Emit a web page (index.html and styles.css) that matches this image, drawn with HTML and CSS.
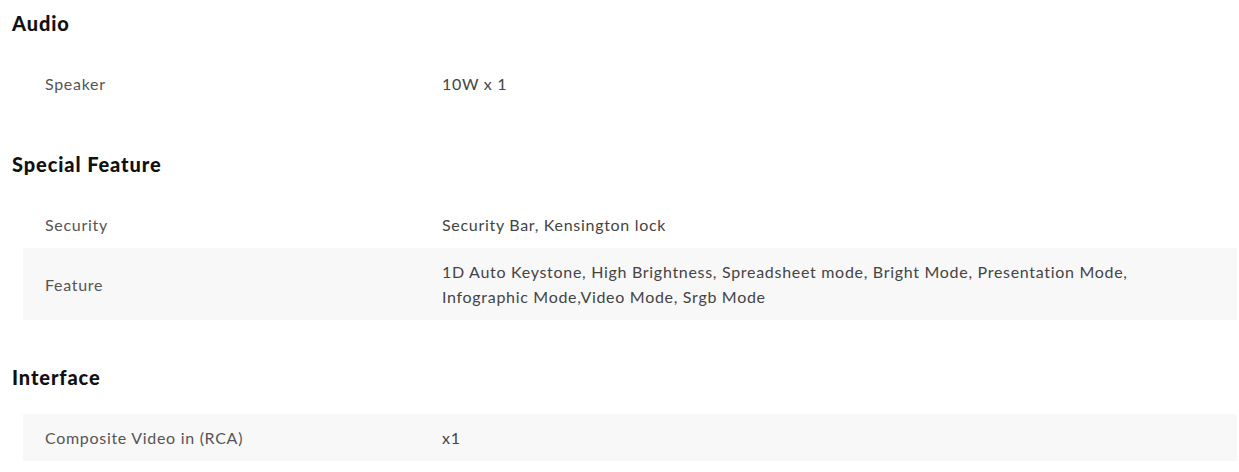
FILE: index.html
```html
<!DOCTYPE html>
<html lang="en">
  <head>
    <meta name="viewport" content="width=device-width, initial-scale=1.0" />
    <title>Specifications</title>
    <link rel="stylesheet" href="styles.css">
  </head>
  <body>
    <div class="specs">
      <section class="spec-group">
        <h3>Audio</h3>
        <div class="spec-rows">
          <div class="spec-row">
            <span class="spec-label">Speaker</span>
            <span class="spec-value">10W x 1</span>
          </div>
        </div>
      </section>
      <section class="spec-group">
        <h3>Special Feature</h3>
        <div class="spec-rows">
          <div class="spec-row">
            <span class="spec-label">Security</span>
            <span class="spec-value">Security Bar, Kensington lock</span>
          </div>
          <div class="spec-row">
            <span class="spec-label">Feature</span>
            <span class="spec-value">1D Auto Keystone, High Brightness, Spreadsheet mode, Bright Mode, Presentation Mode, Infographic Mode,Video Mode, Srgb Mode</span>
          </div>
        </div>
      </section>
      <section class="spec-group">
        <h3>Interface</h3>
        <div class="spec-rows">
          <div class="spec-row">
            <span class="spec-label">Composite Video in (RCA)</span>
            <span class="spec-value">x1</span>
          </div>
        </div>
      </section>
    </div>
  </body>
</html>
```

FILE: styles.css
```css
* {
  padding: 0;
  margin: 0;
  box-sizing: border-box;
  font-family: "Lato", "Open Sans", sans-serif;
}
body {
  background-color: #ffffff;
}
.specs {
  padding: 11px 2px 0 12px;
}
.spec-group {
  margin-bottom: 45px;
}
.spec-group:last-child {
  margin-bottom: 0;
}
h3 {
  font-size: 20px;
  font-weight: 900;
  line-height: 24px;
  letter-spacing: 0.9px;
  color: #111111;
  margin-bottom: 25px;
}
.spec-rows {
  margin-left: 11px;
}
.spec-row {
  display: grid;
  grid-template-columns: 397px 1fr;
  align-items: center;
  padding: 11px 100px 11px 22px;
  min-height: 47px;
  font-size: 16px;
  line-height: 25px;
  letter-spacing: 0.7px;
}
.spec-row:nth-child(even) {
  background-color: #f8f8f8;
}
.spec-group:last-child .spec-row:nth-child(odd) {
  background-color: #f8f8f8;
}
.spec-label {
  color: #555555;
}
.spec-value {
  color: #444444;
}
```
